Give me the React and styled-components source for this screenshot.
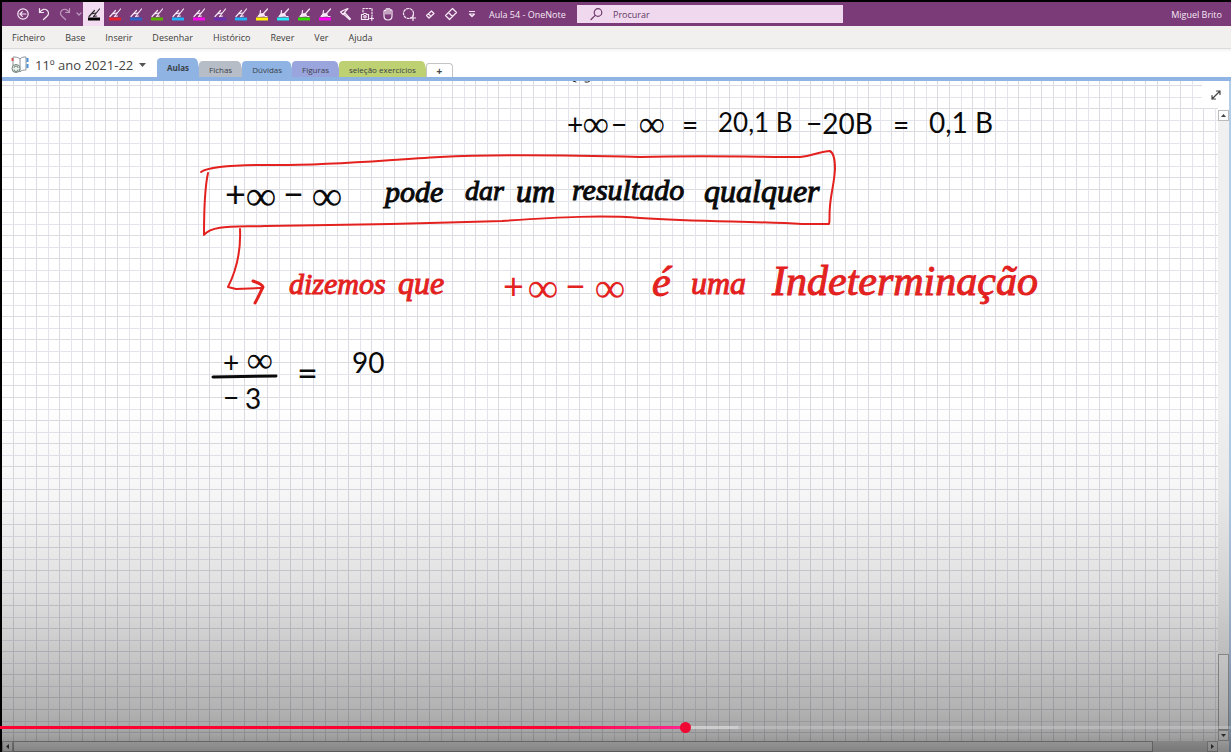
import React, {useState} from 'react';
import styled, {createGlobalStyle} from 'styled-components';

const GlobalStyle = createGlobalStyle`
  * {
    box-sizing: border-box;
  }
  body {
    margin: 0;
    background: #000;
    font-family: "Open Sans", "Noto Sans", sans-serif;
  }
  button {
    margin: 0;
    padding: 0;
    border: 0;
    background: transparent;
    font: inherit;
    color: inherit;
    cursor: pointer;
  }
`;

const Screen = styled.div`
  position: relative;
  display: flex;
  flex-direction: column;
  min-height: 100vh;
  padding: 2px 0 0 2px;
  background: #000;
  overflow: hidden;
`;

const TitleBar = styled.header`
  display: flex;
  align-items: center;
  height: 24px;
  padding: 0 9px 0 10px;
  background: #7b3a78;
  color: #f6e9f5;
  font-size: 9px;
`;
const QuickAccess = styled.div`
  display: flex;
  align-items: center;
`;
const ToolButton = styled.button`
  display: flex;
  align-items: center;
  justify-content: center;
  width: ${({$narrow}) => ($narrow ? '8px' : '21px')};
  height: 24px;
  background: ${({$active}) => ($active ? '#f3dcf1' : 'transparent')};
  color: ${({$active}) => ($active ? '#2b2b2b' : 'inherit')};
  opacity: ${({$dim}) => ($dim ? '0.55' : '1')};
`;
const Glyph = styled.svg`
  display: block;
  flex: none;
  width: 14px;
  height: 14px;
  fill: none;
  stroke: currentColor;
  stroke-width: 1.2;
  stroke-linecap: round;
  stroke-linejoin: round;
`;
const WindowTitle = styled.h1`
  margin: 0;
  padding-left: 7px;
  width: 95px;
  font-size: 9px;
  font-weight: 400;
  white-space: nowrap;
`;
const SearchBox = styled.label`
  display: flex;
  align-items: center;
  gap: 9px;
  width: 266px;
  height: 18px;
  padding-left: 13px;
  background: #f0d8ef;
  color: #6b3a69;
`;
const SearchInput = styled.input`
  flex: 1;
  min-width: 0;
  padding: 0;
  border: 0;
  outline: none;
  background: transparent;
  font: inherit;
  color: #5f3a5e;

  &::placeholder {
    color: #5f3a5e;
    opacity: 1;
  }
`;
const UserName = styled.button`
  margin-left: auto;
  white-space: nowrap;
`;

const MenuBar = styled.nav`
  display: flex;
  align-items: center;
  gap: 20px;
  height: 23px;
  padding-left: 10px;
  background: #f1f0ee;
  border-bottom: 1px solid #dcdbd9;
  color: #3d3c3b;
  font-size: 9px;
`;

const SectionBar = styled.div`
  display: flex;
  align-items: flex-end;
  height: 32px;
  padding-left: 9px;
  background: linear-gradient(#f4f4f4, #fff 4px);
  border-bottom: 4px solid #8fb4e3;
`;
const Notebook = styled.button`
  display: flex;
  align-items: center;
  gap: 6px;
  width: 146px;
  height: 24px;
  color: #444;
  font-size: 13px;
  white-space: nowrap;
`;
const NotebookIcon = styled.svg`
  flex: none;
  width: 18px;
  height: 20px;
`;
const Caret = styled.svg`
  width: 7px;
  height: 4px;
  fill: #555;
`;
const Tab = styled.button`
  position: relative;
  height: ${({$current}) => ($current ? '19px' : '16px')};
  margin-right: 3px;
  padding: 0 7px 0 10px;
  border-radius: 4px 4px 0 0;
  background: ${({$color}) => $color};
  color: #3a4048;
  font-size: 8px;
  font-weight: ${({$current}) => ($current ? '700' : '400')};
  white-space: nowrap;

  &::after {
    content: '';
    position: absolute;
    top: 0;
    right: -3px;
    width: 9px;
    height: 100%;
    border-radius: 0 4px 0 0;
    background: inherit;
    transform: skewX(12deg);
    z-index: -1;
  }
`;
const TabList = styled.div`
  display: flex;
  align-items: flex-end;
  isolation: isolate;
`;
const AddTab = styled.button`
  width: 27px;
  height: 14px;
  border: 1px solid #c4c4c4;
  border-bottom: 0;
  border-radius: 3px 4px 0 0;
  background: #fff;
  color: #444;
  font-size: 10px;
  font-weight: 700;
  line-height: 12px;
`;

const Workspace = styled.div`
  position: relative;
  flex: 1;
  display: grid;
  grid-template-columns: 1fr 11px;
  grid-template-rows: 1fr 11px;
  border-right: 2px solid #b4cce8;
  background: #fff;
`;
const Page = styled.main`
  position: relative;
  min-height: 660px;
  overflow: hidden;
  background: #fff;
`;
const Paper = styled.svg`
  position: absolute;
  inset: 0;
  width: 100%;
  height: 100%;
`;
const Drawing = styled.svg`
  position: absolute;
  left: 0;
  top: 0;
  width: 1200px;
  height: 400px;
  fill: none;
  stroke-linecap: round;
  stroke-linejoin: round;
`;
const Ink = styled.span`
  position: absolute;
  left: ${({$x}) => $x}px;
  top: ${({$y}) => $y}px;
  color: ${({$red}) => ($red ? '#e3221f' : '#0a0a0a')};
  font-family: ${({$plain}) => ($plain ? 'Lato, sans-serif' : '"Liberation Serif", serif')};
  font-size: ${({$size}) => $size}px;
  font-style: ${({$plain}) => ($plain ? 'normal' : 'italic')};
  line-height: 1;
  white-space: pre;
  -webkit-text-stroke: ${({$fine, $plain}) => ($fine || $plain ? '0' : '1px')} currentColor;
`;
const FullPage = styled.button`
  position: absolute;
  top: 0;
  right: 0;
  display: flex;
  align-items: center;
  justify-content: center;
  width: 27px;
  height: 27px;
  background: #fff;
  color: #444;
`;

const SideScroll = styled.div`
  display: flex;
  flex-direction: column;
  padding-top: 29px;
  background: linear-gradient(#fff 29px, #f0f0f0 29px);
`;
const BottomScroll = styled.div`
  display: flex;
  background: #e2e2e2;
`;
const Track = styled.div`
  flex: 1;
  display: flex;
  flex-direction: ${({$vertical}) => ($vertical ? 'column' : 'row')};
  justify-content: ${({$vertical}) => ($vertical ? 'flex-end' : 'flex-start')};
`;
const Thumb = styled.div`
  width: ${({$vertical}) => ($vertical ? '100%' : '95.5%')};
  height: ${({$vertical}) => ($vertical ? '76px' : '100%')};
  border: 1px solid #aaa;
  background: #fbfbfb;
`;
const ScrollButton = styled.button`
  display: flex;
  align-items: center;
  justify-content: center;
  width: 11px;
  height: 11px;
  border: 1px solid #bbb;
  background: #fdfdfd;
`;
const Arrow = styled.svg`
  width: 5px;
  height: 5px;
  fill: #444;
`;

const Shade = styled.div`
  position: absolute;
  left: 0;
  right: 0;
  bottom: 0;
  height: 352px;
  pointer-events: none;
  background: linear-gradient(
    transparent,
    rgba(0, 0, 0, 0.04) 28%,
    rgba(0, 0, 0, 0.13) 55%,
    rgba(0, 0, 0, 0.2) 69%,
    rgba(0, 0, 0, 0.3) 88%,
    rgba(0, 0, 0, 0.36) 95%,
    rgba(0, 0, 0, 0.48)
  );
`;
const Seek = styled.input`
  position: absolute;
  left: 0;
  bottom: 19px;
  width: 100%;
  height: 12px;
  margin: 0;
  appearance: none;
  background: transparent;
  cursor: pointer;

  &::-webkit-slider-runnable-track {
    height: 3px;
    background:
      linear-gradient(to right, #f03 80%, #ff2791) 0 0 / var(--played) 100% no-repeat,
      linear-gradient(rgba(255, 255, 255, 0.3), rgba(255, 255, 255, 0.3)) 0 0 / 60% 100% no-repeat,
      rgba(255, 255, 255, 0.2);
  }
  &::-webkit-slider-thumb {
    appearance: none;
    width: 11px;
    height: 11px;
    margin-top: -4px;
    border-radius: 50%;
    background: #f00834;
  }
`;

const pens = ['#000000', '#e3222b', '#2b63c6', '#5cb100', '#1fb0f5', '#f50ce8', '#6a2fae', '#1fb0f5'];
const markers = ['#fff200', '#25e6f5', '#33dd00', '#ff00f0'];
const menus = ['Ficheiro', 'Base', 'Inserir', 'Desenhar', 'Histórico', 'Rever', 'Ver', 'Ajuda'];
const tabs = [
    {name: 'Aulas', color: '#8fb4e3', current: true},
    {name: 'Fichas', color: '#b7bdc7'},
    {name: 'Dúvidas', color: '#8fb4e3'},
    {name: 'Figuras', color: '#9aa5de'},
    {name: 'seleção exercícios', color: '#bdd072'},
];

// x / y are offsets on the note page
const notes = [
    {text: '+', x: 565, y: 29, size: 28, plain: true},
    {text: '∞', x: 581, y: 25, size: 36, fine: true},
    {text: '−', x: 609, y: 29, size: 28, plain: true},
    {text: '∞', x: 637, y: 25, size: 36, fine: true},
    {text: '=', x: 680, y: 29, size: 28, plain: true},
    {text: '20,1 B', x: 716, y: 28, size: 26, plain: true},
    {text: '−20B', x: 804, y: 28, size: 28, plain: true},
    {text: '=', x: 891, y: 29, size: 28, plain: true},
    {text: '0,1 B', x: 927, y: 27, size: 28, plain: true},
    {text: '+', x: 223, y: 94, size: 36, plain: true},
    {text: '∞', x: 244, y: 94, size: 42, fine: true},
    {text: '−', x: 281, y: 94, size: 36, plain: true},
    {text: '∞', x: 310, y: 94, size: 42, fine: true},
    {text: 'pode', x: 383, y: 96, size: 30},
    {text: 'dar', x: 463, y: 96, size: 28},
    {text: 'um', x: 514, y: 94, size: 32},
    {text: 'resultado', x: 570, y: 94, size: 30},
    {text: 'qualquer', x: 702, y: 94, size: 32},
    {text: 'dizemos', x: 287, y: 188, size: 30, red: true},
    {text: 'que', x: 396, y: 186, size: 32, red: true},
    {text: '+', x: 501, y: 186, size: 36, red: true, plain: true},
    {text: '∞', x: 526, y: 186, size: 42, red: true, fine: true},
    {text: '−', x: 563, y: 186, size: 36, red: true, plain: true},
    {text: '∞', x: 593, y: 186, size: 42, red: true, fine: true},
    {text: 'é', x: 650, y: 180, size: 42, red: true},
    {text: 'uma', x: 689, y: 186, size: 32, red: true},
    {text: 'Indeterminação', x: 770, y: 179, size: 42, red: true},
    {text: '+', x: 221, y: 267, size: 28, plain: true},
    {text: '∞', x: 245, y: 261, size: 36, fine: true},
    {text: '−', x: 221, y: 302, size: 28, plain: true},
    {text: '3', x: 243, y: 303, size: 28, plain: true},
    {text: '=', x: 295, y: 273, size: 36, plain: true},
    {text: '90', x: 350, y: 267, size: 28, plain: true},
];

const Pen = ({color}) => (
    <Glyph viewBox="0 0 14 14" strokeWidth="1">
        <path d="M2 9.500 7.500 3.500M6.500 9.500 12.500 2M4 7 9 6M6.500 9.500 9.500 9"/>
        <path d="M1 12h12" stroke={color} strokeWidth="3" strokeLinecap="butt"/>
    </Glyph>
);

const Marker = ({color}) => (
    <Glyph viewBox="0 0 14 14">
        <path d="M12.500 2 8.500 6.500M5.500 3.500 5 7.500M10 9.500h2"/>
        <path d="M3 9.500 5 7l3.500-.5 1 2.500z" fill="currentColor"/>
        <path d="M1 12h12" stroke={color} strokeWidth="3" strokeLinecap="butt"/>
    </Glyph>
);

const Toolbar = () => (
    <QuickAccess>
        <ToolButton aria-label="Voltar">
            <Glyph viewBox="0 0 14 14"><circle cx="7" cy="7" r="5.2"/><path d="M10 7H4M6.3 4.7 4 7l2.3 2.3"/></Glyph>
        </ToolButton>
        <ToolButton aria-label="Anular">
            <Glyph viewBox="0 0 14 14"><path d="M2.500 1.500v4h4M2.500 5.500C5 2 8 1.500 10 3.2c2.3 2 1.8 4.500 0 6L6.500 12.500"/></Glyph>
        </ToolButton>
        <ToolButton aria-label="Refazer" $dim>
            <Glyph viewBox="0 0 14 14"><path d="M11.500 1.500v4h-4M11.500 5.500C9 2 6 1.500 4 3.2c-2.3 2-1.8 4.500 0 6l3.500 3.3"/></Glyph>
        </ToolButton>
        <ToolButton aria-label="Opções de refazer" $dim $narrow>
            <Glyph viewBox="0 0 14 14"><path d="M5 6l2 2 2-2"/></Glyph>
        </ToolButton>
        {pens.map((color, index) => (
            <ToolButton key={index} aria-label={`Caneta ${index + 1}`} $active={index === 0}>
                <Pen color={color}/>
            </ToolButton>
        ))}
        {markers.map((color, index) => (
            <ToolButton key={color} aria-label={`Marcador ${index + 1}`}><Marker color={color}/></ToolButton>
        ))}
        <ToolButton aria-label="Tinta para forma">
            <Glyph viewBox="0 0 14 14"><path d="M1.500 5C4 4 6 2 9 1.500L5.500 5.500 11.500 12M2 5.500 4 7.500l2.500-3M4.500 7l6 5.500"/></Glyph>
        </ToolButton>
        <ToolButton aria-label="Recorte de ecrã">
            <Glyph viewBox="0 0 14 14"><path d="M3 5V1.500h9V9" strokeDasharray="1.6 1.6"/><path d="M1.500 7.500h1.800l.7-1h2l.7 1h1.800v5h-7zM10 11.500h3.500M11.800 9.800v3.500"/><circle cx="5" cy="9.800" r="1.2"/></Glyph>
        </ToolButton>
        <ToolButton aria-label="Deslocar">
            <Glyph viewBox="0 0 14 14"><path d="M3 7V4.200C3 3 5 3 5 4.200V2.500c0-1.300 2-1.300 2 0 0-1.300 2-1.300 2 0v1.200c0-1.200 2-1.200 2 0V9c0 2.500-1.500 4-4 4s-4-1.500-4-4zM5 4v3M7 2.500V7M9 3.500V7"/></Glyph>
        </ToolButton>
        <ToolButton aria-label="Seleção de laço">
            <Glyph viewBox="0 0 14 14"><circle cx="6.500" cy="6.500" r="5" strokeDasharray="2 1.500"/><path d="M8.500 11h5M11 8.500v5"/></Glyph>
        </ToolButton>
        <ToolButton aria-label="Borracha pequena">
            <Glyph viewBox="0 0 14 14"><path d="M3.500 8.500 8.500 4l2.500 2.500-5 4.500zM5.500 6.800 8 9.300"/></Glyph>
        </ToolButton>
        <ToolButton aria-label="Borracha">
            <Glyph viewBox="0 0 14 14"><path d="M1.500 8.500 8.500 1.500l4 4-7 7zM4.500 5.500l4 4"/></Glyph>
        </ToolButton>
        <ToolButton aria-label="Personalizar">
            <Glyph viewBox="0 0 14 14"><path d="M4.500 4.500h5M4.500 7h5L7 9.500z"/></Glyph>
        </ToolButton>
    </QuickAccess>
);

const App = () => {
    const [played, setPlayed] = useState(557);
    const [query, setQuery] = useState('');

    return (
        <Screen>
            <GlobalStyle/>
            <TitleBar>
                <Toolbar/>
                <WindowTitle>Aula 54 - OneNote</WindowTitle>
                <SearchBox>
                    <Glyph viewBox="0 0 14 14"><circle cx="8" cy="5.500" r="3.800"/><path d="M5.200 8.300 1 12.500"/></Glyph>
                    <SearchInput aria-label="Procurar" placeholder="Procurar" value={query}
                        onChange={(e) => setQuery(e.target.value)}/>
                </SearchBox>
                <UserName>Miguel Brito</UserName>
            </TitleBar>
            <MenuBar>
                {menus.map((name) => <button key={name}>{name}</button>)}
            </MenuBar>
            <SectionBar>
                <Notebook>
                    <NotebookIcon viewBox="0 0 18 20" fill="none" stroke="#8a9299">
                        <path d="M9 4C7 2 4 2 2 2v13c3 0 5 0 7 2 1-2 4-2 6-2V2c-2 0-5 0-6 2zM9 4v12"/>
                        <path d="M1.500 3v3" stroke="#d9534f" strokeWidth="2"/>
                        <path d="M16.500 3v4M16.500 9v4" stroke="#4a8fd0" strokeWidth="2"/>
                        <circle cx="5" cy="13.500" r="4" fill="#eef2ef" stroke="#6f8478"/>
                        <path d="M3 13a2 2 0 0 1 4 0M7 14.500a2 2 0 0 1-4 0" stroke="#6f8478"/>
                    </NotebookIcon>
                    11º ano 2021-22
                    <Caret viewBox="0 0 7 4"><path d="M0 0h7L3.500 4z"/></Caret>
                </Notebook>
                <TabList>
                    {tabs.map(({name, color, current}) => (
                        <Tab key={name} $color={color} $current={current}>{name}</Tab>
                    ))}
                    <AddTab aria-label="Nova secção">+</AddTab>
                </TabList>
            </SectionBar>
            <Workspace>
                <Page>
                    <Paper>
                        <defs>
                            <pattern id="squares" width="104" height="104" x="11" y="4" patternUnits="userSpaceOnUse">
                                {[0, 12, 23, 35, 46, 58, 69, 81, 92].map((at, index) => (
                                    <path key={at} d={`M${at + 0.5} 0v104M0 ${at + 0.5}h104`}
                                        stroke={index % 2 ? '#e4e5ec' : '#dadce2'}/>
                                ))}
                            </pattern>
                        </defs>
                        <rect width="100%" height="100%" fill="url(#squares)"/>
                    </Paper>
                    <Drawing viewBox="0 0 1200 400">
                        <path d="M571 0l3 1M583 1q3 1 5-1" stroke="#222"/>
                        <g stroke="#e3221f" strokeWidth="2">
                            <path d="M199 91C208 85 235 84 263 84 330 85 380 79 438 76 500 73 560 74 638 76 700 74 760 76 798 76 812 75 818 70 828 70 832 72 833 80 833 88 832 104 829 112 828 125 827 134 828 140 827 143L800 143C750 140 700 141 638 137 600 134 560 136 500 140 440 142 350 144 263 145 230 146 210 144 202 154 202 135 202 110 206 92"/>
                            <path d="M238 148C239 170 235 188 226 206L234 208 259 207"/>
                            <path d="M251 200Q260 203 261 206C258 212 256 217 253 222" strokeWidth="3"/>
                        </g>
                        <path d="M211 296 274 295" stroke="#0a0a0a" strokeWidth="3"/>
                    </Drawing>
                    {notes.map(({text, x, y, size, red, plain, fine}) => (
                        <Ink key={`${x}-${y}`} $x={x} $y={y} $size={size} $red={red} $plain={plain} $fine={fine}>
                            {text}
                        </Ink>
                    ))}
                </Page>
                <SideScroll>
                    <ScrollButton aria-label="Para cima"><Arrow viewBox="0 0 5 5"><path d="M0 4h5L2.500 1z"/></Arrow></ScrollButton>
                    <Track $vertical><Thumb $vertical/></Track>
                    <ScrollButton aria-label="Para baixo"><Arrow viewBox="0 0 5 5"><path d="M0 1h5L2.500 4z"/></Arrow></ScrollButton>
                </SideScroll>
                <BottomScroll>
                    <ScrollButton aria-label="Para a esquerda"><Arrow viewBox="0 0 5 5"><path d="M4 0v5L1 2.500z"/></Arrow></ScrollButton>
                    <Track><Thumb/></Track>
                    <ScrollButton aria-label="Para a direita"><Arrow viewBox="0 0 5 5"><path d="M1 0v5l3-2.500z"/></Arrow></ScrollButton>
                </BottomScroll>
                <FullPage aria-label="Vista de página completa">
                    <Glyph viewBox="0 0 14 14"><path d="M3 11 11 3M7.500 3H11v3.500M3 7.500V11h3.500"/></Glyph>
                </FullPage>
            </Workspace>
            <Shade/>
            <Seek type="range" aria-label="Progresso do vídeo" min="0" max="1000" value={played}
                onChange={(e) => setPlayed(Number(e.target.value))}
                style={{'--played': `${played / 10}%`}}/>
        </Screen>
    );
};

export default App;
